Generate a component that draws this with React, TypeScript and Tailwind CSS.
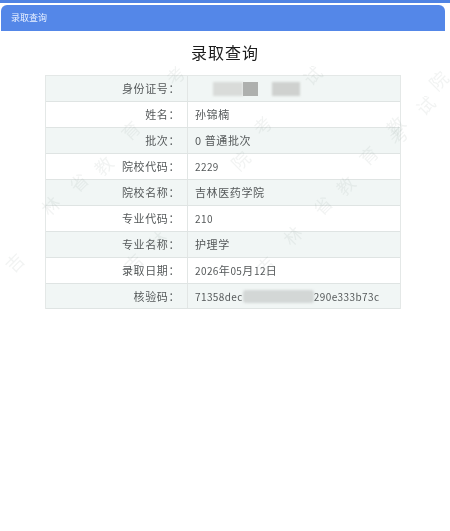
// Admission lookup result page
const FONT = "font-['Noto_Sans_CJK_SC','Noto_Sans',sans-serif]";

// digits in the table run narrower than the Chinese text around them
function Num({ children }: { children: React.ReactNode }) {
  return <span className="text-[10px] tracking-[0.4px]">{children}</span>;
}

const ROWS: { label: string; value: React.ReactNode }[] = [
  {
    label: '身份证号：',
    value: (
      <span className="flex items-center">
        <span className="ml-[18px] h-[14px] w-[30px] bg-[#d9dbd9] blur-[1px]" />
        <span className="h-[14px] w-[15px] bg-[#aeb0ae] blur-[0.5px]" />
        <span className="ml-[14px] h-[14px] w-[28px] bg-[#cfd1cf] blur-[1px]" />
      </span>
    ),
  },
  { label: '姓名：', value: '孙锦楠' },
  { label: '批次：', value: '0 普通批次' },
  { label: '院校代码：', value: <Num>2229</Num> },
  { label: '院校名称：', value: '吉林医药学院' },
  { label: '专业代码：', value: <Num>210</Num> },
  { label: '专业名称：', value: '护理学' },
  {
    label: '录取日期：',
    value: (
      <>
        <Num>2026</Num>年<Num>05</Num>月<Num>12</Num>日
      </>
    ),
  },
  {
    label: '核验码：',
    value: (
      <span className="flex items-center">
        <Num>71358dec</Num>
        <span className="h-[13px] w-[71px] shrink-0 rounded-[3px] bg-[#d3d7d6] blur-[1px]" />
        <Num>290e333b73c</Num>
      </span>
    ),
  },
];

const MARKS = [
  { x: 175, y: 75, c: '考' },
  { x: 312, y: 75, c: '试' },
  { x: 438, y: 80, c: '院' },
  { x: 425, y: 105, c: '试' },
  { x: 262, y: 125, c: '考' },
  { x: 395, y: 125, c: '教' },
  { x: 130, y: 130, c: '育' },
  { x: 103, y: 165, c: '教' },
  { x: 78, y: 182, c: '省' },
  { x: 50, y: 205, c: '林' },
  { x: 14, y: 262, c: '吉' },
  { x: 157, y: 240, c: '林' },
  { x: 133, y: 262, c: '吉' },
  { x: 240, y: 160, c: '院' },
  { x: 368, y: 155, c: '育' },
  { x: 345, y: 185, c: '教' },
  { x: 322, y: 205, c: '省' },
  { x: 292, y: 235, c: '林' },
  { x: 265, y: 265, c: '吉' },
  { x: 398, y: 135, c: '考' },
];

function App() {
  return (
    <div className={`relative h-[531px] w-[450px] overflow-hidden bg-white blur-[0.3px] ${FONT}`}>
      <div className="h-[3px] bg-[#4f83e3]" />
      <div className="ml-px mr-[5px] mt-[2px] flex h-[26px] items-center rounded-t-[6px] bg-[#5487e8] pl-[10px] text-[9px] text-[#e8f0ff]">
        录取查询
      </div>
      <h1 className="mt-[8px] text-center text-[16px] leading-[26px] font-normal tracking-[1px] text-[#1c1c1c]">
        录取查询
      </h1>
      <div className="ml-[45px] mt-[10px] w-[356px] border-x border-t border-[#e4e8e7]">
        {ROWS.map((row, i) => (
          <div
            key={row.label}
            className={`flex h-[26px] items-center border-b border-[#dfe4e3] text-[11px] tracking-[0.6px] text-[#55595a] last:h-[25px] ${
              i % 2 === 0 ? 'bg-[#f1f6f5]' : 'bg-white'
            }`}
          >
            <div className="flex h-full w-[142px] shrink-0 items-center justify-end border-r border-[#e2e6e5] pr-[7px]">
              {row.label}
            </div>
            <div className="whitespace-nowrap pl-[7px]">{row.value}</div>
          </div>
        ))}
      </div>
      {MARKS.map((m) => (
        <div
          key={`${m.x}-${m.y}`}
          style={{ left: m.x - 9, top: m.y - 9 }}
          className="pointer-events-none absolute -rotate-45 text-[18px] leading-[18px] text-[#7f8f89] opacity-[0.1]"
        >
          {m.c}
        </div>
      ))}
    </div>
  );
}

export default App;
